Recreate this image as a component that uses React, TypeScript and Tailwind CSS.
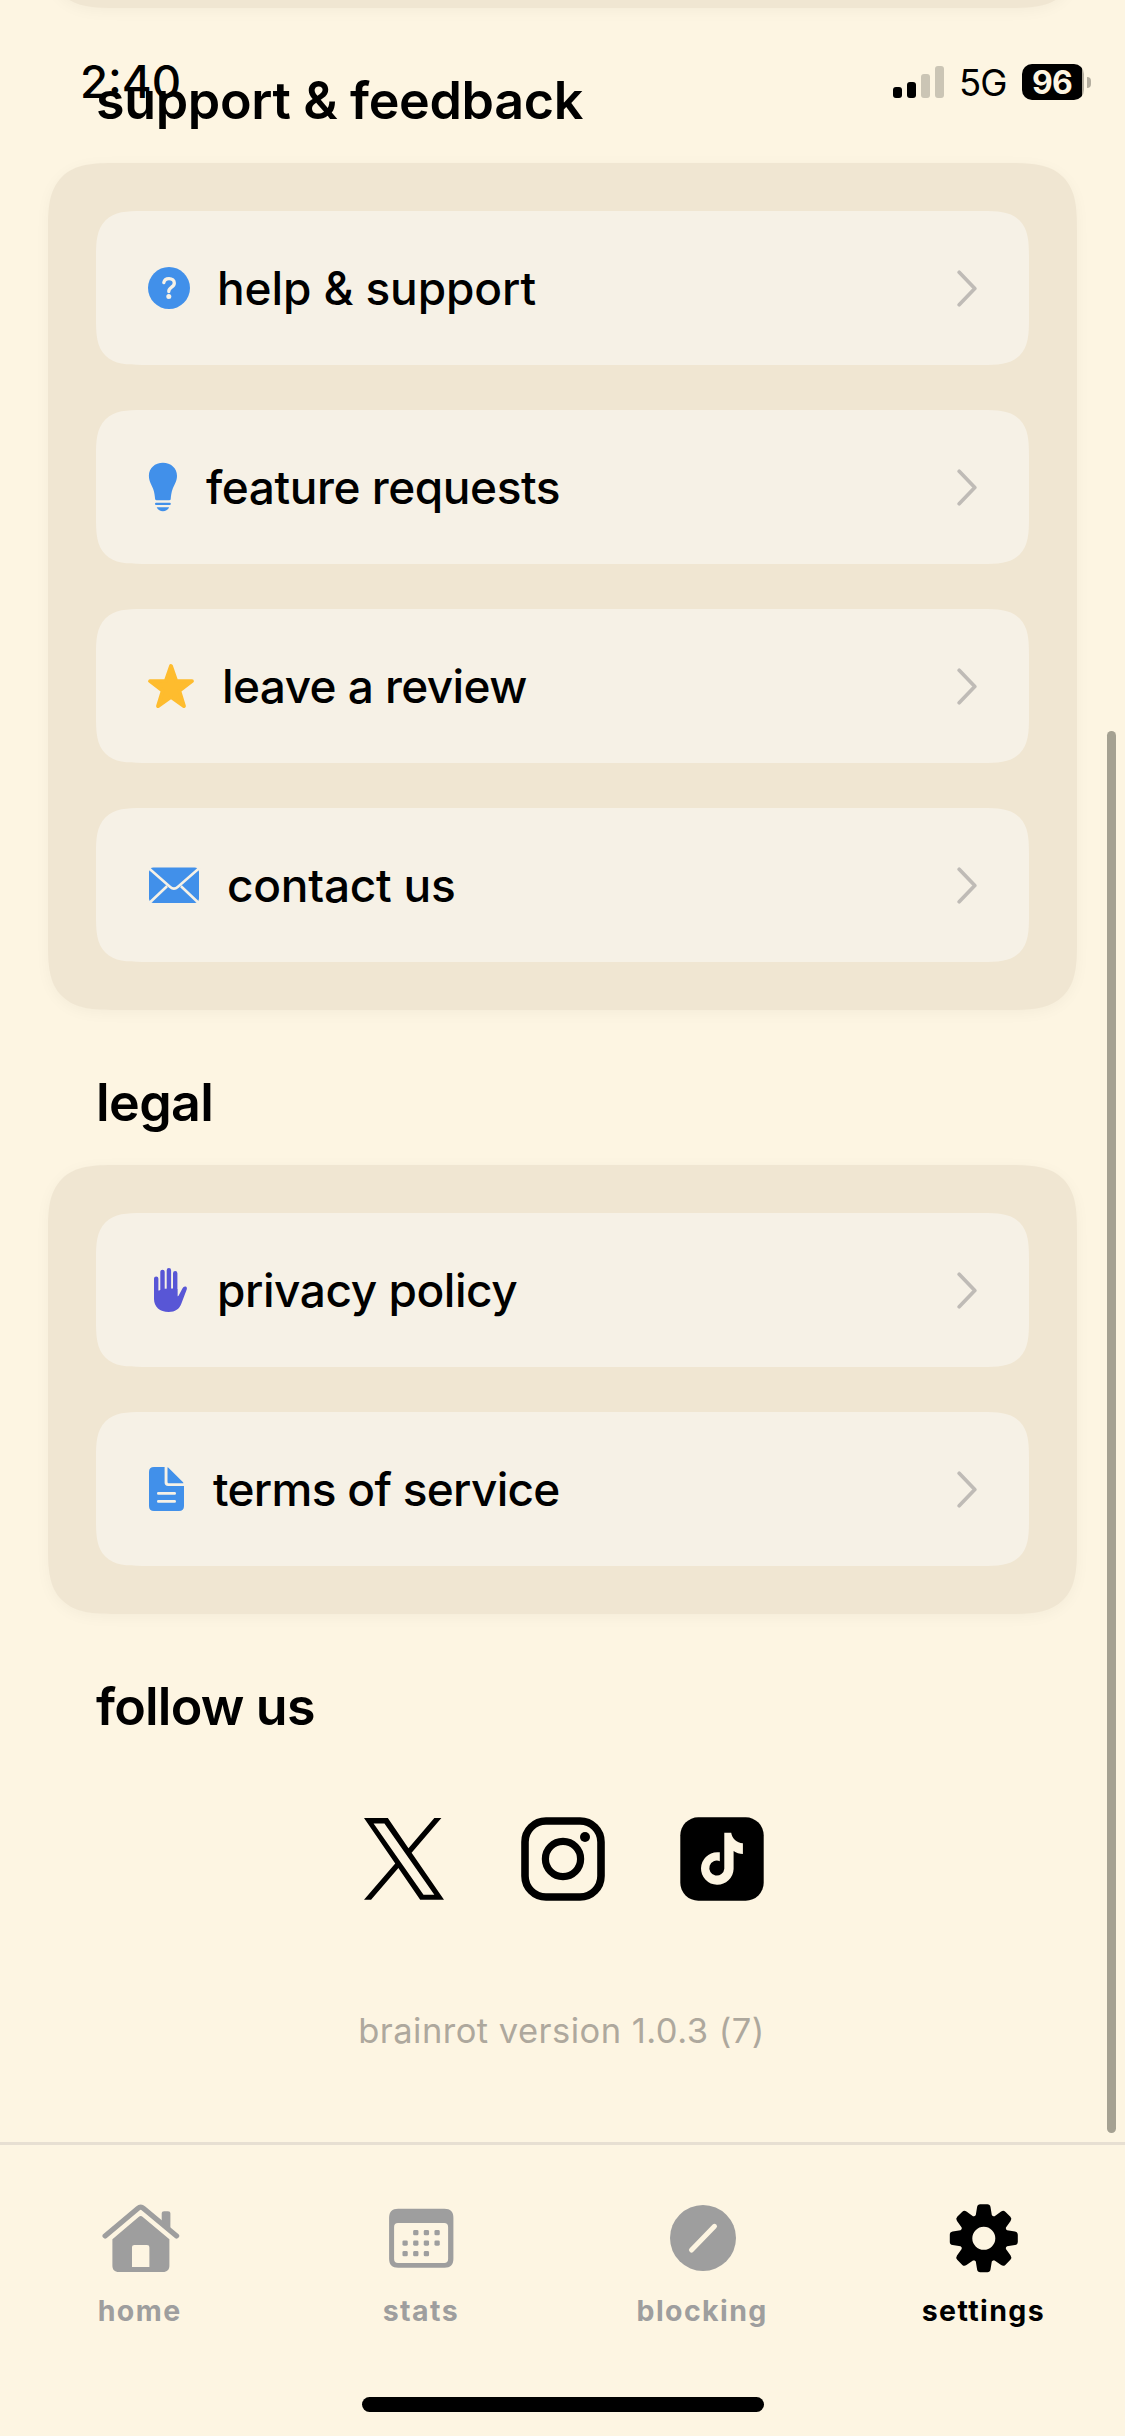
import type { ReactNode } from "react";

const BLUE = "#4190ea";
const ROW = "#f6f1e6";

function HelpIcon() {
  return (
    <svg width="49" height="50" viewBox="0 0 49 50" fill="none">
      <circle cx="25" cy="25" r="21" fill={BLUE} />
      <path
        d="M19.800 19.600c.5-2.600 2.400-4 5.200-4 3.200 0 5.300 1.700 5.300 4.400 0 2-1 3.200-2.900 4.300-1.900 1.200-2.600 2-2.600 3.900v.4"
        stroke={ROW}
        strokeWidth="3.300"
        strokeLinecap="round"
        strokeLinejoin="round"
      />
      <circle cx="24.800" cy="33.500" r="2.500" fill={ROW} />
    </svg>
  );
}

function BulbIcon() {
  return (
    <svg width="38" height="50" viewBox="0 0 38 50" fill={BLUE}>
      <path d="M18.900.8C26.800.8 33 6.200 33 13.800c0 5.500-2.700 8.700-4.300 13-1.400 3.800-1.700 7.200-2 10.200-.1.800-.5 1.200-1.300 1.200h-13c-.8 0-1.200-.4-1.300-1.200-.3-3-.6-6.400-2-10.200C7.500 22.500 4.900 19.300 4.900 13.800 4.900 6.200 11 .8 18.900.8Z" />
      <rect x="11" y="40.700" width="15.800" height="2.300" rx="1.100" />
      <path d="M12.700 45.300h12.400c-.9 2.300-3.200 3.900-6.200 3.900s-5.300-1.600-6.200-3.900Z" />
    </svg>
  );
}

function StarIcon() {
  return (
    <svg width="54" height="50" viewBox="0 0 54 50">
      <path
        d="M27 5 32.200 19.800 48 20.100 35.300 29.800 40 45.100 27 36 14 45.100 18.700 29.800 6 20.100 21.800 19.800Z"
        fill="#febc2e"
        stroke="#febc2e"
        strokeWidth="3.800"
        strokeLinejoin="round"
      />
    </svg>
  );
}

function MailIcon() {
  return (
    <svg width="59" height="50" viewBox="0 0 59 50" fill="none">
      <rect x="5" y="7.500" width="50" height="35.500" rx="4.500" fill={BLUE} />
      <path
        d="M4 7.600 26.200 27c2.500 2.100 5 2.100 7.500 0L56 7.600M4.500 43.800 23 26.200M55.500 43.800 37 26.200"
        stroke={ROW}
        strokeWidth="2.600"
      />
    </svg>
  );
}

function HandIcon() {
  return (
    <svg width="49" height="50" viewBox="0 0 49 50" fill="#5856d6">
      <g stroke="#5856d6" strokeWidth="4.400" strokeLinecap="round">
        <path d="M12.200 13.600V30M18.500 6.900V30M24.900 5.200V30M31.200 8.200V32" />
      </g>
      <path d="M10 25.800 15 25.500 20 23.800 29 23.600 33.400 24v7.200c.5.200 1-.1 1.300-.6l3.700-7c.8-1.700 1.900-2.400 3.100-2.100 1.200.3 1.700 1.400 1.300 2.800l-5.400 14.200C35.300 44.100 31.200 47 24.700 47 15.800 47 10 41.800 10 34Z" />
    </svg>
  );
}

function DocumentIcon() {
  return (
    <svg width="45" height="50" viewBox="0 0 45 50" fill="none">
      <path d="M10 3H20.600V18.500c0 2.300 1.200 3.500 3.500 3.500H40v20c0 3.300-1.700 5-5 5H10c-3.300 0-5-1.700-5-5V8c0-3.300 1.700-5 5-5Z" fill={BLUE} />
      <path d="M23.500 3.300c.4 0 .8.200 1.200.6L38.800 18c.4.400.6.800.6 1.200H25c-1 0-1.500-.5-1.500-1.500Z" fill={BLUE} />
      <path d="M14.300 29.400H30.700M14.300 37.400H30.700" stroke={ROW} strokeWidth="2.600" strokeLinecap="round" />
    </svg>
  );
}

function Row({ icon, children }: { icon: ReactNode; children: ReactNode }) {
  return (
    <div className="flex h-[154px] items-center rounded-[46px] bg-[#f6f1e6] pr-[52px] pl-[48px] [corner-shape:superellipse(1.6)]">
      <span className="shrink-0">{icon}</span>
      <span className="ml-6 flex-1 whitespace-nowrap text-[46px] leading-[56px] font-medium">{children}</span>
      <svg width="20" height="37" viewBox="0 0 20 37" fill="none">
        <path d="m2.200 2.300 15.600 16.200-15.600 16.200" stroke="#bfbbb6" strokeWidth="3.700" strokeLinecap="round" strokeLinejoin="round" />
      </svg>
    </div>
  );
}

function Card({ children }: { children: ReactNode }) {
  return (
    <div className="mx-[48px] flex flex-col gap-[45px] rounded-[68px] bg-[#f0e6d2] p-[48px] shadow-[0_3px_15px_rgba(0,0,0,0.04)] [corner-shape:superellipse(1.6)]">
      {children}
    </div>
  );
}

function Heading({ children }: { children: ReactNode }) {
  return (
    <h2 className="flex h-[155px] items-center pt-[31px] pl-[96px] text-[52px] leading-[62px] font-semibold whitespace-nowrap">
      {children}
    </h2>
  );
}

function HomeIcon() {
  return (
    <svg width="80" height="72" viewBox="0 0 80 72" fill="currentColor">
      <path d="M4.100 33.900 36.800 6.400c1.900-1.600 3.900-1.600 5.800 0L75.600 33.900" fill="none" stroke="currentColor" strokeWidth="5.200" strokeLinecap="round" strokeLinejoin="round" />
      <path d="M60.700 20V11.800c0-1.700.8-2.500 2.500-2.500h3.700c1.700 0 2.500.8 2.500 2.500V28Z" />
      <path
        fillRule="evenodd"
        d="M37.600 14.900c1.400-1.200 2.800-1.200 4.200 0L68.400 37.300V63.500c0 4.300-2.200 6.500-6.500 6.500h-44c-4.300 0-6.500-2.200-6.500-6.500V37.300ZM31 65h17.400V45.500c0-1.700-.8-2.500-2.500-2.500H33.500c-1.700 0-2.500.8-2.500 2.500Z"
      />
    </svg>
  );
}

function StatsIcon() {
  const dots = [
    [33.8, 30.7], [44.4, 30.7], [55.1, 30.7],
    [23.1, 41.1], [33.8, 41.1], [44.4, 41.1], [55.1, 41.1],
    [23.1, 51.7], [33.8, 51.7], [44.4, 51.7],
  ];
  return (
    <svg width="80" height="72" viewBox="0 0 80 72" fill="currentColor">
      <path
        fillRule="evenodd"
        d="M16.100 6.700h46.300c6 0 9 3 9 9v41c0 6-3 9-9 9H16.100c-6 0-9-3-9-9v-41c0-6 3-9 9-9ZM16 21c-2.600 0-3.900 1.300-3.900 3.900v32.200c0 2.600 1.300 3.900 3.900 3.900h46.200c2.600 0 3.900-1.300 3.900-3.900V24.900c0-2.600-1.300-3.900-3.900-3.900Z"
      />
      {dots.map(([x, y]) => (
        <rect key={`${x}-${y}`} x={x - 2.65} y={y - 2.65} width="5.300" height="5.300" rx="1.400" />
      ))}
    </svg>
  );
}

function BlockingIcon() {
  return (
    <svg width="80" height="72" viewBox="0 0 80 72">
      <circle cx="40" cy="36" r="33" fill="currentColor" />
      <path d="M28.500 48 51.500 24.300" stroke="#fdf5e2" strokeWidth="5" strokeLinecap="round" />
    </svg>
  );
}

function SettingsIcon() {
  return (
    <svg width="80" height="72" viewBox="0 0 80 72" fill="currentColor">
      <g transform="translate(39.800 36.300)">
        <circle r="17.500" fill="none" stroke="currentColor" strokeWidth="12" />
        {[0, 45, 90, 135, 180, 225, 270, 315].map((angle) => (
          <path
            key={angle}
            transform={`rotate(${angle})`}
            d="M-10.500-20.500-8-23.300-6.700-31.200Q-6.200-34-3.600-34H3.600Q6.200-34 6.700-31.200L8-23.300 10.500-20.500Z"
          />
        ))}
      </g>
    </svg>
  );
}

function Tab({ icon, active, children }: { icon: ReactNode; active?: boolean; children: ReactNode }) {
  return (
    <div className={`flex flex-1 flex-col items-center ${active ? "text-black" : "text-[#9e9e9e]"}`}>
      {icon}
      <span className="mt-[20px] mr-[2px] text-[28.5px] leading-[34px] font-bold tracking-[1.4px]">{children}</span>
    </div>
  );
}

function StatusBar() {
  return (
    <div className="absolute inset-x-0 top-[54px] flex h-[56px] items-center pl-[80px]">
      <span className="text-[45.5px] leading-[54px] font-medium">2:40</span>
      <div className="ml-auto flex items-center pr-[34px]">
        <div className="flex h-[32px] items-end gap-[5px]">
          <div className="h-[11px] w-[9px] rounded-[3px] bg-black" />
          <div className="h-[16px] w-[9px] rounded-[3px] bg-black" />
          <div className="h-[24px] w-[9px] rounded-[3px] bg-[#cbc5b5]" />
          <div className="h-[32px] w-[9px] rounded-[3px] bg-[#cbc5b5]" />
        </div>
        <span className="mt-[2px] ml-[15px] w-[48px] text-[36.5px] leading-[44px] tracking-[-0.9px]">5G</span>
        <div className="ml-[15px] flex h-[36px] w-[62px] items-center rounded-[10px] bg-[linear-gradient(to_right,#000_60px,#b4ae9f_60px)] pl-[10px]">
          <span className="mt-px text-[32px] leading-[36px] font-bold tracking-[-0.8px] text-[#fdf5e2]">96</span>
        </div>
        <div className="ml-[3px] h-[11px] w-[4px] rounded-r-full bg-[#b4ae9f]" />
      </div>
    </div>
  );
}

export default function App() {
  return (
    <div className="relative flex h-[2436px] w-[1125px] flex-col overflow-hidden bg-[#fdf5e2] font-['Inter',sans-serif] text-black">
      <main className="h-[2142px] overflow-hidden">
        <div className="-mt-[192px]">
          <div className="mx-[48px] h-[200px] rounded-[68px] bg-[#f0e6d2] shadow-[0_3px_15px_rgba(0,0,0,0.04)] [corner-shape:superellipse(1.6)]" />
        </div>

        <Heading><span className="tracking-[-0.35px]">support &amp; feedback</span></Heading>
        <Card>
          <Row icon={<HelpIcon />}><span className="tracking-[-0.12px]">help &amp; support</span></Row>
          <Row icon={<BulbIcon />}><span className="tracking-[-0.44px]">feature requests</span></Row>
          <Row icon={<StarIcon />}><span className="tracking-[-0.6px]">leave a review</span></Row>
          <Row icon={<MailIcon />}><span className="tracking-[-0.24px]">contact us</span></Row>
        </Card>

        <Heading><span className="tracking-[-0.6px]">legal</span></Heading>
        <Card>
          <Row icon={<HandIcon />}><span className="tracking-[-0.45px]">privacy policy</span></Row>
          <Row icon={<DocumentIcon />}><span className="tracking-[-0.7px]">terms of service</span></Row>
        </Card>

        <Heading><span className="tracking-[-0.8px]">follow us</span></Heading>
        <div className="mt-[48px] flex items-center justify-center pl-[3px]">
          <svg width="80" height="82" viewBox="0 0 1200 1227">
            <path d="M714.163 519.284L1160.890 0H1055.030L667.137 450.887L357.328 0H0L468.492 681.821L0 1226.370H105.866L515.491 750.218L842.672 1226.370H1200L714.137 519.284H714.163ZM569.165 687.828L521.697 619.934L144.011 79.694H306.615L611.412 515.685L658.880 583.579L1055.080 1150.300H892.476L569.165 687.854V687.828Z" />
          </svg>
          <svg className="ml-[77px]" width="84" height="84" viewBox="0 0 84 84" fill="none" stroke="#000">
            <rect x="4" y="4" width="76" height="76" rx="21" strokeWidth="7.600" />
            <circle cx="42" cy="42" r="17.600" strokeWidth="7.200" />
            <circle cx="64" cy="20" r="5" fill="#000" stroke="none" />
          </svg>
          <svg className="ml-[75px]" width="84" height="84" viewBox="0 0 84 84">
            <rect x=".3" y=".3" width="83.400" height="83.400" rx="18" />
            <path
              fill="#fdf5e2"
              d="M44.300 15.700h6.900c.8 5.700 5.500 10.300 11.700 10.500v10.700c-3.500-.1-6.500-1.100-9.300-3v18.200a16.300 16.300 0 1 1-16.300-16.900c.9 0 1.700 0 2.500.1v8.900a7.500 7.500 0 1 0 4.500 7.500Z"
            />
          </svg>
        </div>
        <p className="mt-[109px] pr-[2px] text-center text-[34.5px] leading-[42px] tracking-[0.48px] text-[#aea89d]">
          brainrot version 1.0.3 (7)
        </p>
      </main>

      <nav className="flex h-[294px] border-t-[3px] border-[#e7dfd2] pt-[57px]">
        <Tab icon={<HomeIcon />}>home</Tab>
        <Tab icon={<StatsIcon />}>stats</Tab>
        <Tab icon={<BlockingIcon />}>blocking</Tab>
        <Tab icon={<SettingsIcon />} active>settings</Tab>
      </nav>

      <StatusBar />
      <div className="absolute top-[731px] right-[9px] h-[1402px] w-[9px] rounded-full bg-[#a5a192]" />
      <div className="absolute bottom-[24px] left-[362px] h-[15px] w-[402px] rounded-full bg-black" />
    </div>
  );
}
